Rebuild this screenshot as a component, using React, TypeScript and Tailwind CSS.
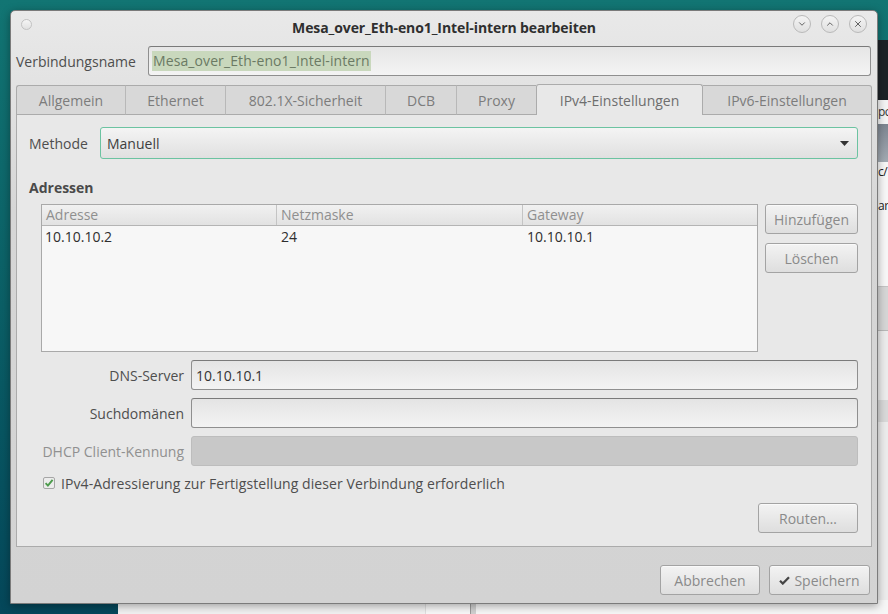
import { ChevronDown, ChevronUp, X } from 'lucide-react';

const tabs = [
  { label: 'Allgemein', w: 'w-[109px]' },
  { label: 'Ethernet', w: 'w-[100px]' },
  { label: '802.1X-Sicherheit', w: 'w-[160px]' },
  { label: 'DCB', w: 'w-[71px]' },
  { label: 'Proxy', w: 'w-[80px]' },
  { label: 'IPv4-Einstellungen', w: 'w-[167px]', active: true },
  { label: 'IPv6-Einstellungen', w: 'w-[169px]' },
];

function TitleButton({ children }: { children: React.ReactNode }) {
  return (
    <div className="w-[18px] h-[18px] rounded-full border border-[#b9b9b9] bg-gradient-to-b from-[#f4f4f4] to-[#e0e0e0] flex items-center justify-center text-[#555]">
      {children}
    </div>
  );
}

function Button({ children, className = '' }: { children: React.ReactNode; className?: string }) {
  return (
    <div
      className={`h-[30px] rounded-[3px] border border-[#a3a3a3] bg-gradient-to-b from-[#f3f3f3] to-[#dedede] shadow-[inset_0_1px_0_#fafafa] flex items-center justify-center text-[14px] text-[#8a8a8a] ${className}`}
    >
      {children}
    </div>
  );
}

function Field({ label, value, disabled }: { label: string; value?: string; disabled?: boolean }) {
  return (
    <div className="flex items-center gap-[7px] pl-[12px]">
      <div className={`w-[143px] text-right text-[14px] ${disabled ? 'text-[#909090]' : 'text-[#4e4e4e]'}`}>{label}</div>
      {disabled ? (
        <div className="flex-1 h-[30px] rounded-[3px] border border-[#bdbdbd] bg-[#c8c8c8]" />
      ) : (
        <div className="flex-1 h-[30px] rounded-[3px] border border-[#8f8f8f] border-t-[#7a7a7a] bg-gradient-to-b from-[#e4e4e4] to-[#f3f3f3] flex items-center px-[4px] text-[14px] text-[#333]">
          {value}
        </div>
      )}
    </div>
  );
}

export default function App() {
  return (
    <div className="relative w-[888px] h-[614px] overflow-hidden bg-gradient-to-b from-[#127573] via-[#0b5f66] to-[#05475a] font-['Open_Sans',sans-serif]">
      {/* windows behind the dialog */}
      <div className="absolute left-[870px] top-[40px] w-[18px] h-[60px] bg-[#1d2226]" />
      <div className="absolute left-[870px] top-[100px] w-[18px] h-[24px] bg-[#f4f4f4] text-[12px] leading-[24px] text-[#333] pl-[8px] tracking-[-0.5px]">pc</div>
      <div className="absolute left-[870px] top-[124px] w-[18px] h-[38px] bg-gradient-to-b from-[#7d8590] to-[#a3abb3]" />
      <div className="absolute left-[870px] top-[162px] w-[18px] h-[124px] bg-[#f7f7f7] text-[12px] text-[#222] pl-[8px] pt-[1px] tracking-[-0.5px]">
        <div>c/</div>
        <div className="mt-[16px]">ar</div>
      </div>
      <div className="absolute left-[870px] top-[286px] w-[18px] h-[44px] bg-[#d6d6d6] border-t border-[#c4c4c4]" />
      <div className="absolute left-[870px] top-[330px] w-[18px] h-[284px] bg-[#ececec] border-t border-[#b8b8b8]" />
      <div className="absolute left-[870px] top-[400px] w-[18px] h-[22px] bg-[#d9d9d9]" />
      <div className="absolute left-[118px] top-[600px] w-[307px] h-[14px] bg-[#f1f1f1]" />
      <div className="absolute left-[425px] top-[600px] w-[45px] h-[14px] bg-[#f7f7f7] border-l border-[#dedede]" />
      <div className="absolute left-[470px] top-[600px] w-[6px] h-[14px] bg-[#d0d0d0] border-l border-[#9a9a9a]" />
      <div className="absolute left-[476px] top-[600px] w-[412px] h-[14px] bg-[#f6f6f6]" />

      {/* dialog */}
      <div className="absolute left-[10px] top-[10px] w-[868px] h-[594px] flex flex-col rounded-t-[5px] border border-[#7b7b7b] bg-[linear-gradient(to_bottom,#e9e9e9_0px,#e2e2e2_80px,#d6d6d6_200px,#d3d3d3_100%)] shadow-[0_2px_8px_rgba(0,0,0,0.35)]">
        {/* title bar */}
        <div className="relative h-[33px] flex items-center justify-center shrink-0">
          <div className="absolute left-[10px] top-[8px] w-[11px] h-[11px] rounded-full border border-[#c2c2c2] bg-gradient-to-b from-[#f5f5f5] to-[#e1e1e1]" />
          <div className="text-[14px] font-bold text-[#2f2f2f] tracking-[-0.1px]">Mesa_over_Eth-eno1_Intel-intern bearbeiten</div>
          <div className="absolute right-[10px] top-[4px] flex gap-[10px]">
            <TitleButton>
              <ChevronDown size={10} strokeWidth={2.2} />
            </TitleButton>
            <TitleButton>
              <ChevronUp size={10} strokeWidth={2.2} />
            </TitleButton>
            <TitleButton>
              <X size={10} strokeWidth={2.2} />
            </TitleButton>
          </div>
        </div>

        <div className="flex-1 flex flex-col px-[5px]">
          {/* connection name */}
          <div className="flex items-center h-[30px] mt-[2px] mr-[1px]">
            <div className="w-[132px] text-[14px] text-[#4e4e4e]">Verbindungsname</div>
            <div className="flex-1 h-[30px] rounded-[3px] border border-[#8f8f8f] border-t-[#7a7a7a] bg-gradient-to-b from-[#e6e6e6] to-[#f4f4f4] flex items-center px-[3px]">
              <span className="bg-[#c9d8bd] text-[14px] leading-[20px] text-[#6b7a64] px-[1px] tracking-[0.1px]">Mesa_over_Eth-eno1_Intel-intern</span>
            </div>
          </div>

          {/* notebook */}
          <div className="mt-[8px] flex flex-col">
            <div className="flex items-end h-[31px]">
              {tabs.map((t, i) =>
                t.active ? (
                  <div
                    key={t.label}
                    className={`${t.w} h-[31px] bg-[#e8e8e8] border-t border-x border-[#ababab] rounded-t-[3px] flex items-center justify-center text-[14px] text-[#6e6e6e]`}
                  >
                    {t.label}
                  </div>
                ) : (
                  <div
                    key={t.label}
                    className={`${t.w} h-[30px] bg-[#d8d8d8] border-t border-b border-[#ababab] ${i === 0 ? 'border-l rounded-tl-[3px]' : ''} ${i === tabs.length - 1 ? 'border-r rounded-tr-[3px]' : ''} ${i > 0 && !tabs[i - 1].active ? 'border-l border-l-[#b8b8b8]' : ''} flex items-center justify-center text-[14px] text-[#7c7c7c]`}
                  >
                    {t.label}
                  </div>
                )
              )}
            </div>

            <div className="h-[432px] bg-[#e8e8e8] border-x border-b border-[#ababab] pl-[12px] pr-[13px] pt-[12px] flex flex-col">
              {/* method */}
              <div className="flex items-center h-[32px]">
                <div className="w-[71px] text-[14px] text-[#4e4e4e]">Methode</div>
                <div className="flex-1 h-[32px] rounded-[3px] border border-[#6cc3a1] bg-gradient-to-b from-[#f4f4f4] to-[#e0e0e0] flex items-center justify-between pl-[6px] pr-[8px] text-[14px] text-[#3e3e3e]">
                  <span>Manuell</span>
                  <svg width="9" height="5" viewBox="0 0 9 5">
                    <path d="M0 0h9L4.5 5z" fill="#333" />
                  </svg>
                </div>
              </div>

              <div className="mt-[19px] h-[20px] text-[14px] font-bold text-[#4a4a4a] leading-[20px]">Adressen</div>

              {/* addresses table */}
              <div className="mt-[6px] flex gap-[7px] pl-[12px]">
                <div className="flex-1 h-[148px] border border-[#a9a9a9] bg-[#f7f7f7] flex flex-col">
                  <div className="h-[21px] flex bg-gradient-to-b from-[#f1f1f1] to-[#e2e2e2] border-b border-[#b4b4b4] text-[14px] text-[#8f8f8f] leading-[20px]">
                    <div className="w-[235px] pl-[4px] border-r border-[#c4c4c4]">Adresse</div>
                    <div className="w-[246px] pl-[4px] border-r border-[#c4c4c4]">Netzmaske</div>
                    <div className="flex-1 pl-[4px]">Gateway</div>
                  </div>
                  <div className="flex text-[14px] text-[#2e2e2e] leading-[22px]">
                    <div className="w-[236px] pl-[3px]">10.10.10.2</div>
                    <div className="w-[246px] pl-[3px]">24</div>
                    <div className="flex-1 pl-[3px]">10.10.10.1</div>
                  </div>
                </div>
                <div className="w-[93px] flex flex-col gap-[9px]">
                  <Button className="h-[29px]">Hinzufügen</Button>
                  <Button className="h-[29px]">Löschen</Button>
                </div>
              </div>

              <div className="mt-[8px] flex flex-col gap-[8px]">
                <Field label="DNS-Server" value="10.10.10.1" />
                <Field label="Suchdomänen" value="" />
                <Field label="DHCP Client-Kennung" disabled />
              </div>

              {/* checkbox */}
              <div className="mt-[7px] h-[20px] flex items-center gap-[6px] pl-[14px] text-[14px] text-[#4e4e4e]">
                <svg width="12" height="12" viewBox="0 0 12 12">
                  <rect x="0.5" y="0.5" width="11" height="11" rx="1.5" fill="#ececec" stroke="#a6a6a6" />
                  <path d="M2.6 6.2l2.3 2.4L9.6 2.8" fill="none" stroke="#4c9b4c" strokeWidth="1.9" />
                </svg>
                <span className="tracking-[0.08px]">IPv4-Adressierung zur Fertigstellung dieser Verbindung erforderlich</span>
              </div>

              <div className="mt-[10px] flex justify-end">
                <Button className="w-[100px]">Routen…</Button>
              </div>
            </div>
          </div>

          {/* footer */}
          <div className="flex-1 flex items-end justify-end gap-[9px] pb-[8px] pr-[2px]">
            <Button className="w-[100px]">Abbrechen</Button>
            <Button className="w-[101px] gap-[4px]">
              <svg width="11" height="9" viewBox="0 0 11 9">
                <path d="M1 4.8l2.8 2.8L10 1.2" fill="none" stroke="#454545" strokeWidth="2.2" />
              </svg>
              <span>Speichern</span>
            </Button>
          </div>
        </div>
      </div>
    </div>
  );
}
